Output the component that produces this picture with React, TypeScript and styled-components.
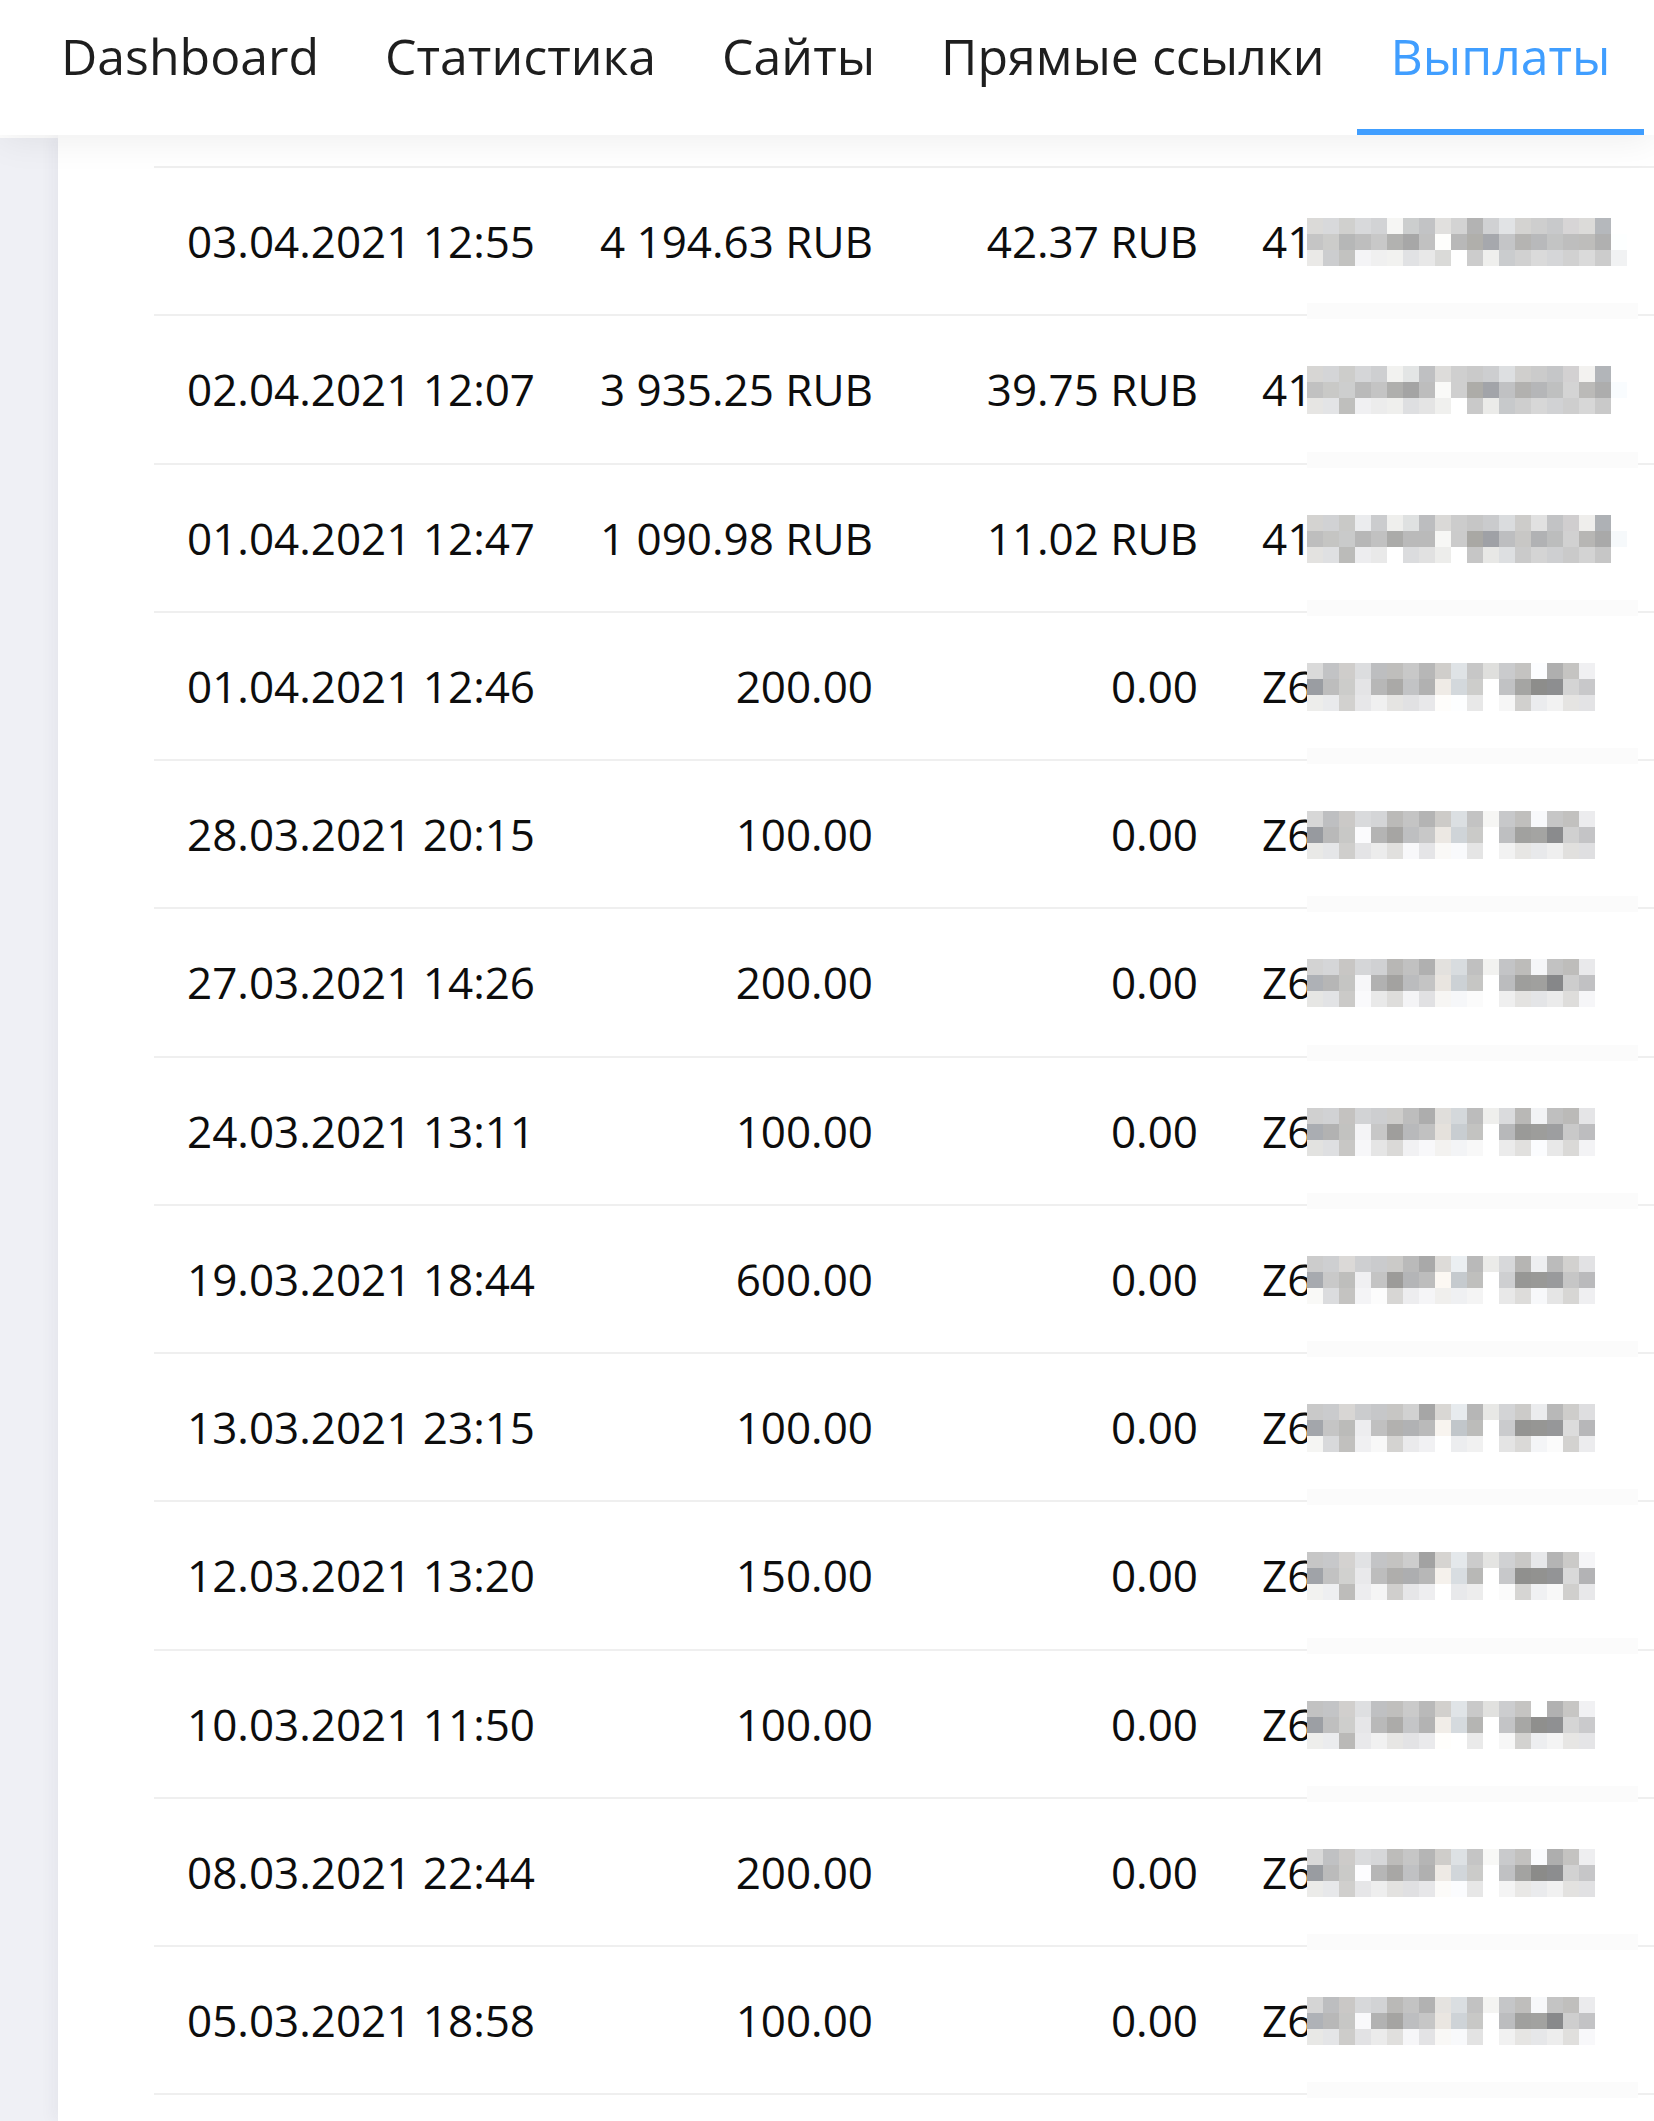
import React from "react";
import styled, { createGlobalStyle } from "styled-components";

const GlobalStyle = createGlobalStyle`
  html, body {
    margin: 0;
    padding: 0;
    background: #fff;
    overflow: hidden;
  }
  body {
    font-family: "Open Sans", "Noto Sans", sans-serif;
    color: #111;
  }
`;

type Payout = {
  date: string;
  amount: string;
  fee: string;
  wallet: "41" | "Z6";
};

const tabs = ["Dashboard", "Статистика", "Сайты", "Прямые ссылки", "Выплаты"];
const ACTIVE_TAB = "Выплаты";

const payouts: Payout[] = [
  { date: "03.04.2021 12:55", amount: "4 194.63 RUB", fee: "42.37 RUB", wallet: "41" },
  { date: "02.04.2021 12:07", amount: "3 935.25 RUB", fee: "39.75 RUB", wallet: "41" },
  { date: "01.04.2021 12:47", amount: "1 090.98 RUB", fee: "11.02 RUB", wallet: "41" },
  { date: "01.04.2021 12:46", amount: "200.00", fee: "0.00", wallet: "Z6" },
  { date: "28.03.2021 20:15", amount: "100.00", fee: "0.00", wallet: "Z6" },
  { date: "27.03.2021 14:26", amount: "200.00", fee: "0.00", wallet: "Z6" },
  { date: "24.03.2021 13:11", amount: "100.00", fee: "0.00", wallet: "Z6" },
  { date: "19.03.2021 18:44", amount: "600.00", fee: "0.00", wallet: "Z6" },
  { date: "13.03.2021 23:15", amount: "100.00", fee: "0.00", wallet: "Z6" },
  { date: "12.03.2021 13:20", amount: "150.00", fee: "0.00", wallet: "Z6" },
  { date: "10.03.2021 11:50", amount: "100.00", fee: "0.00", wallet: "Z6" },
  { date: "08.03.2021 22:44", amount: "200.00", fee: "0.00", wallet: "Z6" },
  { date: "05.03.2021 18:58", amount: "100.00", fee: "0.00", wallet: "Z6" },
];

// censored wallet numbers: rows of grey mosaic cells (hex without #)
const mosaic: Record<Payout["wallet"], string[][]> = {
  "41": [
    "dfdedc d5d6d8 c6c6c4 e1e2e4 d3d4d6 f0f0ee d9dbdb c8c9cb dfdedc cacaca bdbdbd d3d4d6 dcdee0 c8c7c5 d5d5d5 c8c9cb cfcdce e7e6e4 b9bcc0 ffffff".split(" "),
    "c3c3c3 c3c3c1 c0c1c1 c0c0c0 c3c3c3 a6a6a4 aeaeae c0c0c0 f6f6f4 c3c3c3 b4b3af a2a4a9 b9babc bdbcba b9babc bcbdbd cacaca c3c2c0 aeaeae f3f6f8".split(" "),
    "e2e1df d7d8da c6c6c4 f0f0f2 e5e5e5 fafaf8 e2e3e5 e1e1e1 e6e6e4 ffffff cacaca e5e5e3 d3d5d7 d3d3d3 d5d5d5 c8c9cb d7d7d7 d9d9d9 c4c4c4 fbfcfd".split(" "),
  ],
  Z6: [
    "cfcfcf c9cacc cfcdcb d5d6d8 c9cacc c3c2c0 c5c5c5 adadad d9d7d4 e0e4e7 c1c1c1 ececea d0d1d3 c2c1bf f3f4f6 b9b9b9 c8c7c5 ebebed".split(" "),
    "a3a6ab bebebe c6c6c4 f1f1f3 bdbdbd a8a7a5 b9babc bbbbbb f2eee9 ced3d7 c1c1bf ffffff c1c2c4 9d9d9b 989896 919294 d0d0d0 bdbdbf".split(" "),
    "efefed e4e5e7 c6c5c3 eeeef0 efefef dddcda ececee ececee faf9f7 f2f3f5 f0f0f0 ffffff efefef dddcda f0f1f3 f0f0f0 dbdad8 ececee".split(" "),
  ],
};

const jitter = (hex: string, seed: number) => {
  if (hex === "ffffff") return "#ffffff";
  const d = ((seed * 9301 + 49297) % 233280) / 233280;
  const delta = Math.round((d - 0.5) * 26);
  const ch = [0, 2, 4].map((i) =>
    Math.max(0, Math.min(255, parseInt(hex.slice(i, i + 2), 16) + delta))
  );
  return "#" + ch.map((v) => v.toString(16).padStart(2, "0")).join("");
};

const Page = styled.div`
  min-height: 100vh;
  display: flex;
  flex-direction: column;
`;

const TopNav = styled.nav`
  position: relative;
  z-index: 2;
  height: 135px;
  display: flex;
  padding-left: 28px;
  background: #fff;
  box-shadow: 0 4px 36px rgba(0, 0, 0, 0.075);
`;

const Tab = styled.a<{ $active?: boolean }>`
  position: relative;
  box-sizing: border-box;
  height: 135px;
  padding: 0 33px 23px;
  font-size: 50px;
  line-height: 112px;
  white-space: nowrap;
  color: ${(p) => (p.$active ? "#409eff" : "#1e1e1e")};
  cursor: pointer;

  &::after {
    content: "";
    display: ${(p) => (p.$active ? "block" : "none")};
    position: absolute;
    left: 0;
    right: 0;
    bottom: 0;
    height: 6px;
    background: #409eff;
  }
`;

const Body = styled.div`
  flex: 1;
  display: flex;
  background: #fff;
`;

const Sidebar = styled.aside`
  width: 58px;
  flex-shrink: 0;
  margin-top: 3px;
  background: #eff0f5;
`;

const Main = styled.main`
  position: relative;
  z-index: 1;
  flex: 1;
  min-width: 0;
  padding: 31px 0 0 96px;
  background: #fff;
  box-shadow: -5px 0 14px rgba(30, 40, 70, 0.05);
  overflow: hidden;
`;

const Table = styled.div`
  width: 1500px;
  border-top: 2px solid #efefef;
`;

const Row = styled.div`
  display: grid;
  grid-template-columns: 415px 337px 325px 1fr;
  height: 146.25px;
  border-bottom: 2px solid #efefef;
  font-size: 44px;
  color: #0d0d0d;
`;

const Cell = styled.div<{ $align?: "left" | "right" }>`
  display: flex;
  align-items: center;
  justify-content: ${(p) => (p.$align === "right" ? "flex-end" : "flex-start")};
  padding: 0 33px;
  white-space: nowrap;
`;

const WalletCell = styled(Cell)`
  position: relative;
  padding-left: 31px;

  &::after {
    content: "";
    position: absolute;
    left: 76px;
    width: 331px;
    bottom: -5px;
    height: 16px;
    background: #fbfbfb;
  }
`;

const Mosaic = styled.span<{ $cols: number }>`
  display: inline-grid;
  grid-template-columns: repeat(${(p) => p.$cols}, 16px);
  grid-auto-rows: 16px;
  margin-left: -5px;
  margin-top: 2px;
`;

const Tile = styled.i`
  display: block;
`;

const Censored = ({ wallet, row }: { wallet: Payout["wallet"]; row: number }) => {
  const grid = mosaic[wallet];
  return (
    <Mosaic $cols={grid[0].length}>
      {grid.map((line, r) =>
        line.map((hex, c) => (
          <Tile
            key={`${r}-${c}`}
            style={{ background: jitter(hex, row * 97 + r * 31 + c * 7 + 3) }}
          />
        ))
      )}
    </Mosaic>
  );
};

export default function App() {
  return (
    <Page>
      <GlobalStyle />
      <TopNav>
        {tabs.map((t) => (
          <Tab key={t} $active={t === ACTIVE_TAB}>
            {t}
          </Tab>
        ))}
      </TopNav>
      <Body>
        <Sidebar />
        <Main>
          <Table>
            {payouts.map((p, i) => (
              <Row key={i}>
                <Cell>{p.date}</Cell>
                <Cell $align="right">{p.amount}</Cell>
                <Cell $align="right">{p.fee}</Cell>
                <WalletCell>
                  {p.wallet}
                  <Censored wallet={p.wallet} row={i} />
                </WalletCell>
              </Row>
            ))}
          </Table>
        </Main>
      </Body>
    </Page>
  );
}
